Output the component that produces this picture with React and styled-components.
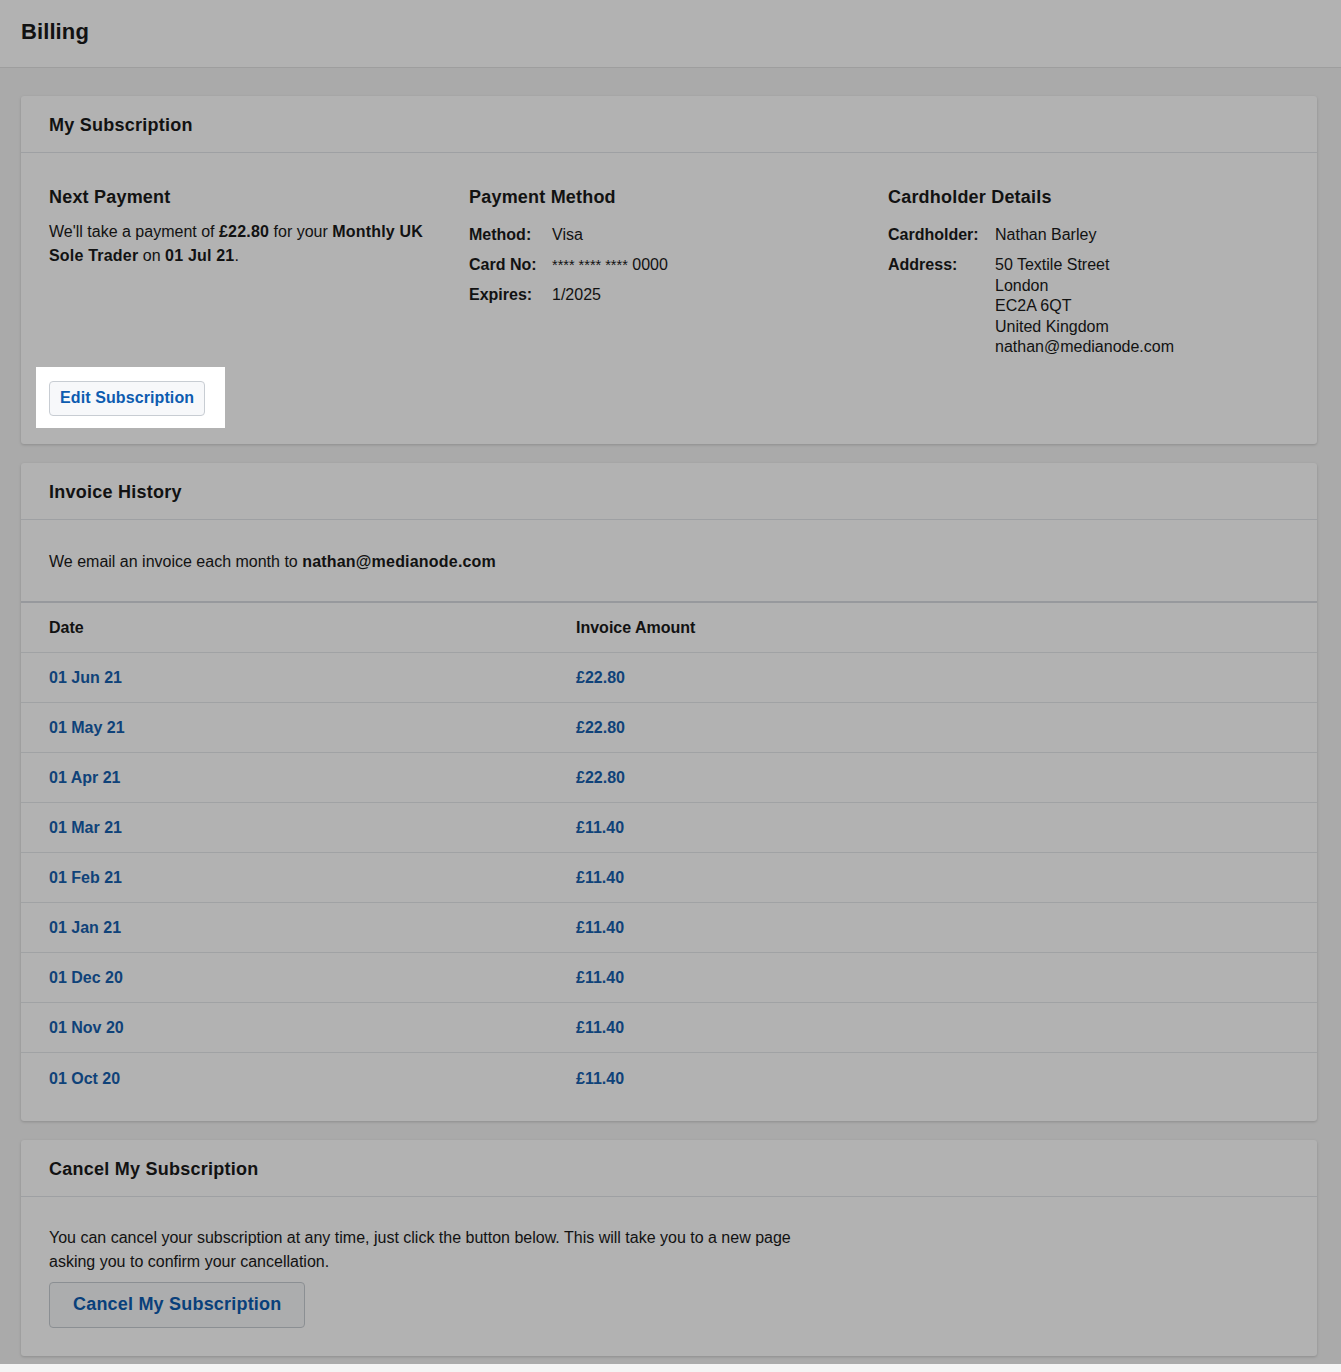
import React from "react";
import styled, { createGlobalStyle } from "styled-components";

const invoices = [
  { date: "01 Jun 21", amount: "£22.80" },
  { date: "01 May 21", amount: "£22.80" },
  { date: "01 Apr 21", amount: "£22.80" },
  { date: "01 Mar 21", amount: "£11.40" },
  { date: "01 Feb 21", amount: "£11.40" },
  { date: "01 Jan 21", amount: "£11.40" },
  { date: "01 Dec 20", amount: "£11.40" },
  { date: "01 Nov 20", amount: "£11.40" },
  { date: "01 Oct 20", amount: "£11.40" },
];

const App = () => {
  return (
    <>
      <GlobalStyle />
      {/* Top bar */}
      <TopBar>
        <h1>Billing</h1>
      </TopBar>

      <Content>
        {/* My Subscription */}
        <Card>
          <CardHeader>
            <h2>My Subscription</h2>
          </CardHeader>
          <CardBody $top="32px">
            <Columns>
              <Column>
                <h3>Next Payment</h3>
                <p>
                  We'll take a payment of <b>£22.80</b> for your{" "}
                  <b>Monthly UK Sole Trader</b> on <b>01 Jul 21</b>.
                </p>
              </Column>
              <Column>
                <h3>Payment Method</h3>
                <DetailList $labelWidth="83px">
                  <dt>Method:</dt>
                  <dd>Visa</dd>
                  <dt>Card No:</dt>
                  <dd>
                    <Stars>**** **** ****</Stars> 0000
                  </dd>
                  <dt>Expires:</dt>
                  <dd>1/2025</dd>
                </DetailList>
              </Column>
              <Column>
                <h3>Cardholder Details</h3>
                <DetailList $labelWidth="107px">
                  <dt>Cardholder:</dt>
                  <dd>Nathan Barley</dd>
                  <dt>Address:</dt>
                  <dd>
                    50 Textile Street
                    <br />
                    London
                    <br />
                    EC2A 6QT
                    <br />
                    United Kingdom
                    <br />
                    nathan@medianode.com
                  </dd>
                </DetailList>
              </Column>
            </Columns>
            <Spotlit>
              <Spot />
              <Button>Edit Subscription</Button>
            </Spotlit>
          </CardBody>
        </Card>

        {/* Invoice History */}
        <Card>
          <CardHeader>
            <h2>Invoice History</h2>
          </CardHeader>
          <CardBody $top="30px" $bottom="27px">
            <p>
              We email an invoice each month to <b>nathan@medianode.com</b>
            </p>
          </CardBody>
          <Table>
            <TableRow $head>
              <span>Date</span>
              <span>Invoice Amount</span>
            </TableRow>
            {invoices.map((item, index) => (
              <TableRow key={`invoice${index}`}>
                <a>{item.date}</a>
                <a>{item.amount}</a>
              </TableRow>
            ))}
          </Table>
        </Card>

        {/* Cancel */}
        <Card>
          <CardHeader>
            <h2>Cancel My Subscription</h2>
          </CardHeader>
          <CardBody>
            <CancelText>
              You can cancel your subscription at any time, just click the button
              below. This will take you to a new page asking you to confirm your
              cancellation.
            </CancelText>
            <Button $large>Cancel My Subscription</Button>
          </CardBody>
        </Card>
      </Content>
    </>
  );
};

// Styled Components
// ---------------------------------------------------------------------------
const GlobalStyle = createGlobalStyle`
  * { box-sizing: border-box; }
  body {
    margin: 0;
    background: #f4f4f4;
    color: #1a1a1a;
    font-family: "Liberation Sans", Arial, sans-serif;
    font-size: 16px;
  }
`;

const TopBar = styled.div`
  height: 68px;
  background: #fff;
  border-bottom: 1px solid #e2e2e2;
  display: flex;
  align-items: center;
  padding: 0 21px 4px;

  & h1 {
    margin: 0;
    font-size: 22px;
    font-weight: 700;
    letter-spacing: 0.1px;
  }
`;

const Content = styled.div`
  display: flex;
  flex-direction: column;
  gap: 19px;
  padding: 28px 24px 8px 21px;
`;

const Card = styled.div`
  background: #fff;
  border-radius: 3px;
  box-shadow: 0 1px 3px rgba(0, 0, 0, 0.18);
`;

const CardHeader = styled.div`
  height: 57px;
  padding: 3px 28px 0;
  display: flex;
  align-items: center;
  border-bottom: 1px solid #e3e6ea;

  & h2 {
    margin: 0;
    font-size: 18px;
    font-weight: 700;
    letter-spacing: 0.25px;
  }
`;

const CardBody = styled.div`
  padding: ${(p) => p.$top || "29px"} 28px ${(p) => p.$bottom || "28px"};

  & p {
    margin: 0;
    line-height: 24px;
  }
  & b {
    letter-spacing: 0.2px;
  }
`;

const Columns = styled.div`
  display: grid;
  grid-template-columns: 420px 419px 1fr;
`;

const Column = styled.div`
  padding-right: 20px;

  & h3 {
    margin: 0 0 11px;
    font-size: 18px;
    line-height: 24px;
    font-weight: 700;
    letter-spacing: 0.2px;
  }
`;

const DetailList = styled.dl`
  display: grid;
  grid-template-columns: ${(p) => p.$labelWidth} 1fr;
  row-gap: 9.5px;
  margin: 0;
  padding-top: 5px;
  line-height: 20.5px;

  & dt {
    font-weight: 700;
  }
  & dd {
    margin: 0;
  }
`;

const Stars = styled.span`
  font-size: 14.5px;
`;

const Spotlit = styled.div`
  position: relative;
  display: inline-block;
  margin-top: 23px;
`;

// dim overlay over the whole page with a hole around the button
const Spot = styled.div`
  position: absolute;
  top: -14px;
  left: -13px;
  right: -20px;
  bottom: -12px;
  box-shadow: 0 0 0 3000px rgba(0, 0, 0, 0.3);
  pointer-events: none;
  z-index: 10;
`;

const Button = styled.button`
  display: block;
  height: ${(p) => (p.$large ? "46px" : "35px")};
  padding: 0 ${(p) => (p.$large ? "23px" : "10px")};
  background: #f7f8fa;
  border: 1px solid #c8cdd3;
  border-radius: 4px;
  color: #0d5cb0;
  font-family: "Liberation Sans", Arial, sans-serif;
  font-size: ${(p) => (p.$large ? "18px" : "16px")};
  font-weight: 700;
  letter-spacing: ${(p) => (p.$large ? "0.2px" : "0.1px")};
  cursor: pointer;
`;

const Table = styled.div`
  border-top: 2px solid #d8dce1;
  padding-bottom: 18px;
`;

const TableRow = styled.div`
  display: grid;
  grid-template-columns: 527px 1fr;
  align-items: center;
  height: 50px;
  padding: ${(p) => (p.$head ? "1px" : "2px")} 28px 0;
  border-bottom: 1px solid #e6e8eb;
  font-weight: 700;
  font-size: 16px;

  &:last-child {
    border-bottom: none;
  }

  & a {
    color: #165fae;
    cursor: pointer;
  }
`;

const CancelText = styled.p`
  max-width: 780px;
  margin-bottom: 8px !important;
`;

export default App;
